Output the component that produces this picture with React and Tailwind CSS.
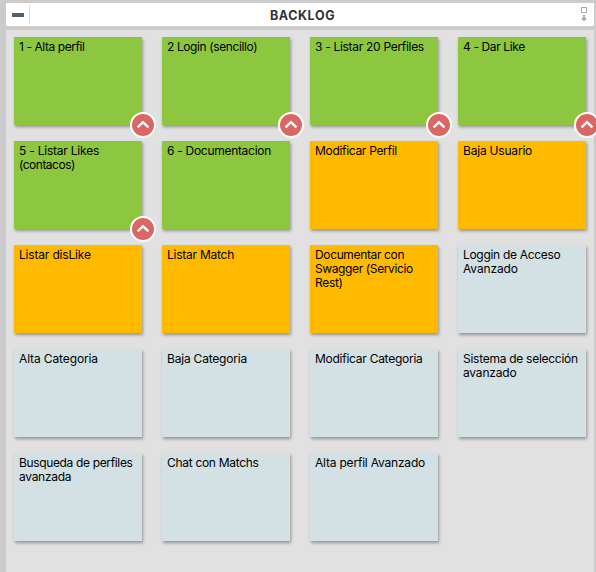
const GREEN = "bg-[#8dc63f]";
const AMBER = "bg-[#ffba00]";
const BLUE = "bg-[#d3e0e4]";

const cards = [
  { color: GREEN, blocked: true, lines: [["1 - Alta perfil", "tracking-[-0.43px]"]] },
  { color: GREEN, blocked: true, lines: [["2 Login (sencillo)", "tracking-[-0.39px]"]] },
  { color: GREEN, blocked: true, lines: [["3 - Listar 20 Perfiles", "tracking-[-0.3px]"]] },
  { color: GREEN, blocked: true, lines: [["4 - Dar Like", "tracking-[-0.37px]"]] },
  { color: GREEN, blocked: true, lines: [["5 - Listar Likes", "tracking-[-0.22px]"], ["(contacos)", "tracking-[-0.5px]"]] },
  { color: GREEN, lines: [["6 - Documentacion", "tracking-[-0.29px]"]] },
  { color: AMBER, lines: [["Modificar Perfil", "tracking-[-0.31px]"]] },
  { color: AMBER, lines: [["Baja Usuario", "tracking-[-0.2px]"]] },
  { color: AMBER, lines: [["Listar disLike", "tracking-[-0.18px]"]] },
  { color: AMBER, lines: [["Listar Match", "tracking-[-0.25px]"]] },
  { color: AMBER, lines: [["Documentar con", "tracking-[-0.36px]"], ["Swagger (Servicio", "tracking-[-0.38px]"], ["Rest)", "tracking-[-0.3px]"]] },
  { color: BLUE, lines: [["Loggin de Acceso", "tracking-[-0.31px]"], ["Avanzado", "tracking-[-0.12px]"]] },
  { color: BLUE, lines: [["Alta Categoria", "tracking-[-0.12px]"]] },
  { color: BLUE, lines: [["Baja Categoria", "tracking-[-0.2px]"]] },
  { color: BLUE, lines: [["Modificar Categoria", "tracking-[-0.26px]"]] },
  { color: BLUE, lines: [["Sistema de selección", "tracking-[-0.27px]"], ["avanzado", "tracking-[-0.2px]"]] },
  { color: BLUE, lines: [["Busqueda de perfiles", "tracking-[-0.35px]"], ["avanzada", "tracking-[-0.3px]"]] },
  { color: BLUE, lines: [["Chat con Matchs", "tracking-[-0.3px]"]] },
  { color: BLUE, lines: [["Alta perfil Avanzado", "tracking-[-0.2px]"]] },
];

function PriorityBadge() {
  return (
    <svg className="absolute -right-[14px] -bottom-[13px] h-[26px] w-[26px]" viewBox="0 0 26 26">
      <circle cx="13" cy="13" r="12" fill="#db6764" stroke="#fff" strokeWidth="2" />
      <path d="M7.6 15.4 13 10.2l5.4 5.2" fill="none" stroke="#fff" strokeWidth="2.3" />
    </svg>
  );
}

function Card({ color, blocked, lines }) {
  return (
    <div className={`relative h-[88px] w-32 pt-[3px] pl-[5px] text-xs leading-[14px] text-black shadow-[1px_2px_3px_rgba(0,0,0,0.35)] ${color}`}>
      {lines.map(([text, tracking]) => (
        <div key={text} className={`whitespace-nowrap ${tracking}`}>{text}</div>
      ))}
      {blocked && <PriorityBadge />}
    </div>
  );
}

export default function App() {
  return (
    <div className="h-[572px] w-[596px] overflow-hidden bg-[#cbcbcb] pt-[3px] pr-0.5 pl-1.5 font-['Inter',sans-serif]">
      <header className="flex h-[23px] items-center bg-white">
        <div className="flex h-[19px] w-6 items-start border-r border-[#d8d8d8] pt-2 pl-1.5">
          <div className="h-1 w-3 bg-[#4b6373]" />
        </div>
        <h1 className="flex-1 pt-0.5 pr-[5px] text-center text-[12.5px] leading-[21px] font-bold tracking-[0.6px] text-[#333]">BACKLOG</h1>
        <svg className="mr-1.5 h-[15px] w-2" viewBox="0 0 8 15">
          <rect x="1.5" y="0.5" width="5" height="5" fill="none" stroke="#aaa" />
          <path d="M3 8h2v3h2l-3 3.5L1 11h2z" fill="#aaa" />
        </svg>
      </header>
      <main className="mt-1 h-[542px] bg-[#e1e1e1] pt-[7px] pl-2">
        <div className="grid grid-cols-[repeat(4,128px)] gap-x-5 gap-y-4">
          {cards.map((card) => (
            <Card key={card.lines[0][0]} {...card} />
          ))}
        </div>
      </main>
    </div>
  );
}
